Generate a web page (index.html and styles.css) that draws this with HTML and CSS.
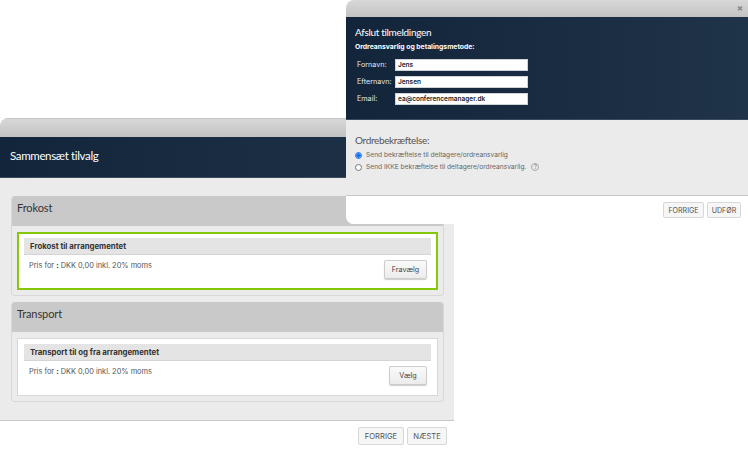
FILE: index.html
```html
<!DOCTYPE html>
<html lang="da">
<head>
<meta charset="utf-8">
<title>Tilmelding</title>
<link rel="stylesheet" href="styles.css">
</head>
<body>
<section class="win win-back">
  <div class="topbar"></div>
  <header class="hero hero-back"><h1 class="hero-title">Sammensæt tilvalg</h1></header>
  <div class="content">
    <section class="group">
      <h2 class="group-head">Frokost</h2>
      <div class="group-body">
        <div class="item item-on">
          <h3 class="item-head">Frokost til arrangementet</h3>
          <div class="item-row">
            <p class="price">Pris for <b>:</b> DKK 0,00 inkl. 20% moms</p>
            <button class="btn-choose btn-wide">Fravælg</button>
          </div>
        </div>
      </div>
    </section>
    <section class="group">
      <h2 class="group-head">Transport</h2>
      <div class="group-body">
        <div class="item">
          <h3 class="item-head">Transport til og fra arrangementet</h3>
          <div class="item-row">
            <p class="price">Pris for <b>:</b> DKK 0,00 inkl. 20% moms</p>
            <button class="btn-choose">Vælg</button>
          </div>
        </div>
      </div>
    </section>
  </div>
  <footer class="foot foot-back">
    <button class="btn-nav btn-prev-back">FORRIGE</button>
    <button class="btn-nav btn-next-back">NÆSTE</button>
  </footer>
</section>

<section class="win win-front">
  <div class="topbar topbar-front"><span class="close">✖</span></div>
  <header class="hero hero-front">
    <h1 class="front-title">Afslut tilmeldingen</h1>
    <h2 class="front-sub">Ordreansvarlig og betalingsmetode:</h2>
    <div class="fields">
      <label class="field-label">Fornavn:</label><div class="field-value">Jens</div>
      <label class="field-label">Efternavn:</label><div class="field-value">Jensen</div>
      <label class="field-label">Email:</label><div class="field-value">ea@conferencemanager.dk</div>
    </div>
  </header>
  <div class="confirm">
    <h2 class="confirm-title">Ordrebekræftelse:</h2>
    <div class="radio-row"><span class="radio radio-on"></span><span>Send bekræftelse til deltagere/ordreansvarlig</span></div>
    <div class="radio-row"><span class="radio"></span><span>Send IKKE bekræftelse til deltagere/ordreansvarlig.</span><span class="help">?</span></div>
  </div>
  <footer class="foot foot-front">
    <button class="btn-nav btn-prev-front">FORRIGE</button>
    <button class="btn-nav btn-next-front">UDFØR</button>
  </footer>
</section>
</body>
</html>
```
FILE: styles.css
```css
* { box-sizing: border-box; }
html, body { margin: 0; padding: 0; }
body {
  width: 748px;
  height: 451px;
  overflow: hidden;
  position: relative;
  background: #fff;
  font-family: Inter, "Liberation Sans", sans-serif;
  color: #444;
}
h1, h2, h3, p { margin: 0; font-weight: normal; }
.win { position: absolute; display: flex; flex-direction: column; background: #fff; }
.win-back { left: 0; top: 118px; width: 454px; height: 333px; border-top-left-radius: 8px; overflow: hidden; }
.win-front { left: 346px; top: 0; width: 402px; height: 224px; border-radius: 8px 0 0 8px; overflow: hidden; }
.topbar {
  height: 19px;
  flex: none;
  background: linear-gradient(#d8d8d8, #c2c2c2);
  border-top: 1px solid #c4c4c4;
}
.topbar-front { height: 17px; border-top: 0; display: flex; justify-content: flex-end; align-items: center; padding-right: 5px; }
.close { font-size: 7px; line-height: 1; color: #8a8a8a; }
.hero { background: linear-gradient(90deg, #13253a, #1f3349); color: #fff; flex: none; }
.hero-back { height: 41px; display: flex; align-items: center; padding-left: 10px; border-bottom: 1px solid #3a4a5c; }
.hero-title { font-family: Lato, sans-serif; font-size: 11.5px; letter-spacing: -0.35px; color: #fff; position: relative; top: -2px; }
.hero-front { height: 103px; padding: 8px 9px 0; border-bottom: 1px solid #3a4a5c; }
.front-title { font-family: Lato, sans-serif; font-size: 10px; letter-spacing: -0.32px; line-height: 14px; }
.front-sub { font-size: 6.8px; font-weight: 700; line-height: 10px; margin-top: 3px; }
.fields {
  display: grid;
  grid-template-columns: 38px 133px;
  grid-auto-rows: 12px;
  row-gap: 5px;
  margin: 7px 0 0 2px;
  align-items: center;
}
.field-label { font-size: 7.2px; color: #e4e8ec; position: relative; top: -1px; }
.field-value {
  height: 12px;
  background: #fff;
  color: #222;
  font-size: 6.5px;
  font-weight: 600;
  padding-left: 2px;
  border: 1px solid #cfd3d8;
  line-height: 10px;
}
.confirm { height: 76px; flex: none; background: #ebebeb; padding: 14px 9px 0; border-bottom: 1px solid #c8c8c8; }
.confirm-title { font-family: Lato, sans-serif; font-size: 10px; letter-spacing: -0.35px; line-height: 13px; color: #555; margin-bottom: 2px; }
.radio-row { display: flex; align-items: center; height: 12px; font-size: 6.65px; color: #666; gap: 4px; }
.radio { width: 7px; height: 7px; border-radius: 50%; border: 1px solid #777; background: #fff; flex: none; }
.radio-on { border: 1px solid #1a73e8; background: radial-gradient(circle, #1a73e8 0 2px, #fff 2.5px); }
.help { width: 8px; height: 8px; border-radius: 50%; border: 1px solid #aaa; color: #888; font-size: 5.5px; line-height: 6px; text-align: center; margin-left: 1px; }
.content { height: 242px; flex: none; background: #ebebeb; padding: 18px 10px 0 11px; }
.group { border-radius: 4px; overflow: hidden; border: 1px solid #d8d8d8; border-top: 0; margin-bottom: 6px; }
.group:first-child { height: 100px; }
.group:last-child { height: 100px; }
.group-head { height: 30px; background: #c9c9c9; font-family: Lato, sans-serif; font-size: 11px; letter-spacing: -0.1px; line-height: 24px; color: #333; padding-left: 5px; }
.group-body { padding: 6px 5px; }
.item { background: #fff; border: 1px solid #d8d8d8; height: 58px; padding: 5px 6px; }
.item-on { border: 2px solid #86c70a; padding: 4px 5px; }
.item-head { background: #e4e4e4; height: 17px; border-bottom: 1px solid #d4d4d4; font-size: 7.8px; font-weight: 700; line-height: 17px; color: #333; padding-left: 6px; }
.item-row { display: flex; justify-content: space-between; align-items: flex-start; padding: 5px 4px 0 5px; }
.price { font-size: 7.4px; line-height: 11px; color: #555; }
.price b { color: #333; }
.btn-choose {
  width: 38px; height: 19px; margin: 0;
  padding: 0;
  background: linear-gradient(#fafafa, #ececec);
  border: 1px solid #ccc; border-radius: 2px;
  box-shadow: 0 1px 1px #ccc;
  font-family: Inter, sans-serif; font-size: 7.2px; color: #444;
}
.btn-wide { width: 43px; }
.foot { flex: none; display: flex; justify-content: flex-end; gap: 3px; background: #fff; }
.foot-back { border-top: 1px solid #c8c8c8; height: 31px; padding: 6px 7px 0 0; }
.foot-front { height: 28px; padding: 6px 7px 0 0; }
.btn-nav {
  padding: 0;
  background: #f6f6f6;
  border: 1px solid #d8d8d8; border-radius: 2px;
  font-family: Inter, sans-serif; color: #555;
}
.btn-prev-back { width: 46px; height: 18px; font-size: 7.6px; }
.btn-next-back { width: 40px; height: 18px; font-size: 7.6px; }
.btn-prev-front { width: 41px; height: 16px; font-size: 7.1px; }
.btn-next-front { width: 34px; height: 16px; font-size: 7.1px; }
```
